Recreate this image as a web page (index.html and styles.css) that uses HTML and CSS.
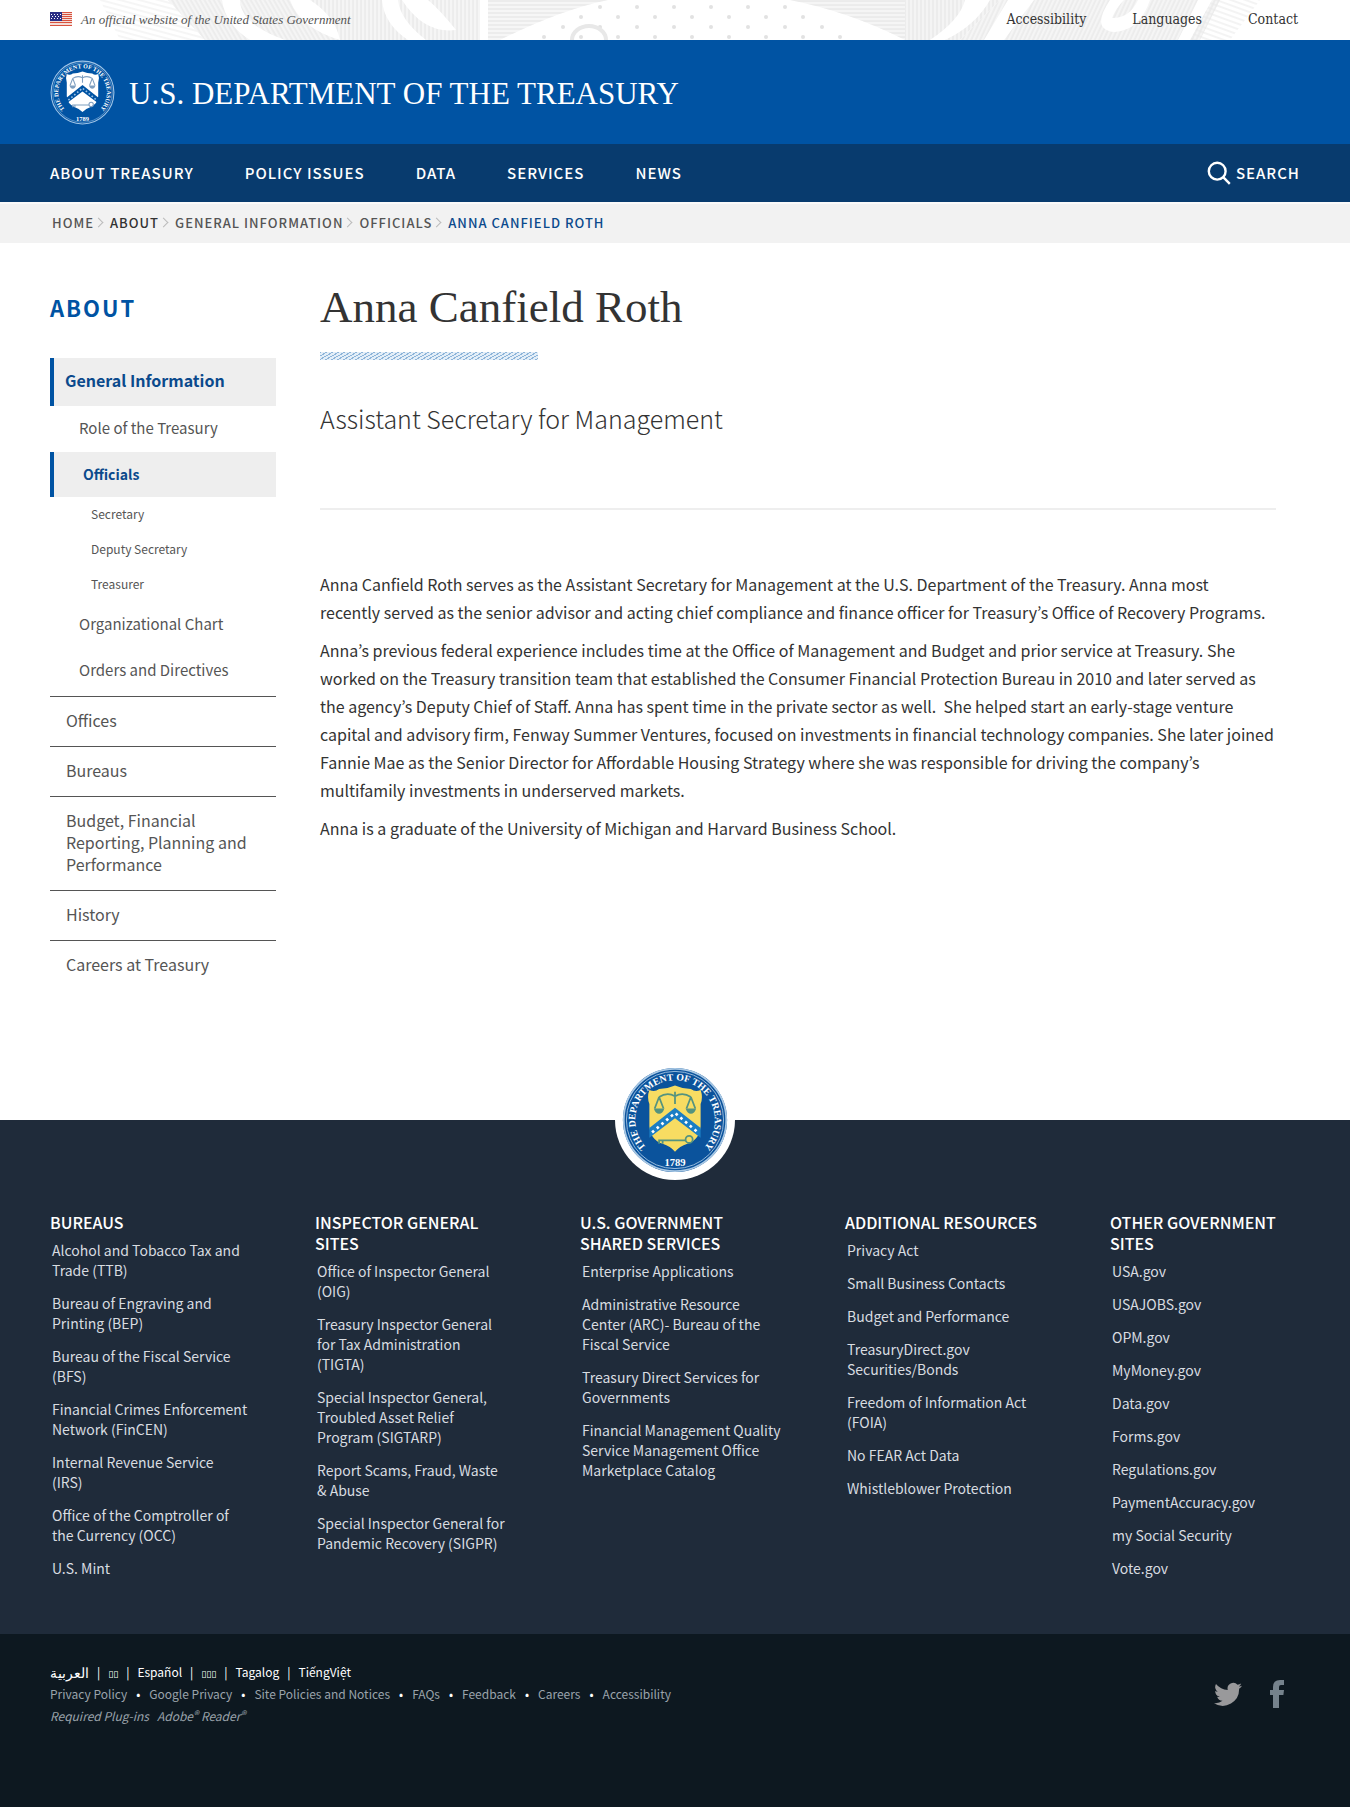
FILE: index.html
```html
<!DOCTYPE html>
<html lang="en">
<head>
<meta charset="utf-8">
<meta name="viewport" content="width=device-width, initial-scale=1">
<title>Anna Canfield Roth | U.S. Department of the Treasury</title>
<link rel="stylesheet" href="styles.css">
</head>
<body>
<svg class="defs" aria-hidden="true">
  <defs>
    <path id="ring" d="M37.500 99A45 45 0 1 1 82.500 99"/>
    <symbol id="seal" viewBox="0 0 120 120">
      <circle class="s-base" cx="60" cy="60" r="59"/>
      <circle class="s-line" cx="60" cy="60" r="58" fill="none" stroke-width="2"/>
      <circle class="s-line" cx="60" cy="60" r="55" fill="none" stroke-width="1"/>
      <path class="s-shield" d="M31 26q6 3 11-1q9 0 18-4q9 4 18 4q5 4 11 1q3 8 0 16v25q-1 15-15 20q-9 3-14 9q-5-6-14-9q-14-5-15-20V42q-3-8 0-16z"/>
      <path class="s-band" d="M31 69L60 46L89 69V80L60 58L31 80z"/>
      <path class="s-stars" d="M34 74L60 52L86 74" fill="none" stroke-width="3" stroke-dasharray="3 4"/>
      <path class="s-ink" d="M60 28V42M42 34Q51 28 60 33Q69 28 78 34M42 34L37 47M42 34L47 47M78 34L73 47M78 34L83 47" fill="none" stroke-width="2"/>
      <path class="s-ink-fill" d="M36 47H48Q46 53 42 53Q38 53 36 47zM72 47H84Q82 53 78 53Q74 53 72 47z"/>
      <path class="s-ink" d="M41 83H72M42 83V87M46 83V87" fill="none" stroke-width="2"/>
      <circle class="s-ink" cx="76" cy="82" r="4" fill="none" stroke-width="2"/>
      <text class="s-text" font-size="11"><textPath href="#ring" startOffset="50%" text-anchor="middle">THE DEPARTMENT OF THE TREASURY</textPath></text>
      <text class="s-text" font-size="12" x="60" y="112" text-anchor="middle">1789</text>
    </symbol>
  </defs>
</svg>

<div class="gov-bar">
  <svg class="gov-art" viewBox="0 0 1350 40" preserveAspectRatio="xMidYMid slice" aria-hidden="true">
    <defs>
      <pattern id="vert" width="4" height="4" patternUnits="userSpaceOnUse"><path d="M1 0V4" stroke="#e4e4e4"/></pattern>
      <pattern id="horiz" width="4" height="4" patternUnits="userSpaceOnUse"><path d="M0 1H4" stroke="#e2e2e2"/></pattern>
      <pattern id="rays-l" width="5" height="5" patternUnits="userSpaceOnUse" patternTransform="rotate(-75)"><path d="M1 0V5" stroke="#ececec"/></pattern>
      <pattern id="steep-l" width="4" height="4" patternUnits="userSpaceOnUse" patternTransform="rotate(-30)"><path d="M1 0V4" stroke="#e4e4e4"/></pattern>
      <pattern id="steep-r" width="4" height="4" patternUnits="userSpaceOnUse" patternTransform="rotate(25)"><path d="M1 0V4" stroke="#e4e4e4"/></pattern>
      <pattern id="rays-r" width="5" height="5" patternUnits="userSpaceOnUse" patternTransform="rotate(-70)"><path d="M1 0V5" stroke="#e8e8e8"/></pattern>
      <pattern id="dots" width="37" height="20" patternUnits="userSpaceOnUse"><circle cx="8" cy="7" r="2" fill="#e2e2e2"/><circle cx="26" cy="17" r="2" fill="#e2e2e2"/></pattern>
    </defs>
    <path d="M100 0H180L205 40H120z" fill="url(#rays-l)"/>
    <path d="M168 0H300L350 40H205z" fill="#f5f5f5"/>
    <path d="M168 0H300L350 40H205z" fill="url(#steep-l)"/>
    <path d="M290 0H487V40H340z" fill="#f5f5f5"/>
    <path d="M290 0H487V40H340z" fill="url(#vert)"/>
    <path d="M222 0Q225 24 250 40H285Q240 24 240 0zM290 0Q300 28 340 40Q335 16 310 0zM382 0Q384 24 408 40H426Q400 20 398 0zM402 0Q424 34 456 30Q440 10 428 0z" fill="#fff"/>
    <path d="M480 0H487V40H480z" fill="#fff"/>
    <path d="M488 0H608Q560 10 500 40H488z" fill="#f6f6f6"/>
    <path d="M488 0H608Q560 10 500 40H488z" fill="url(#horiz)"/>
    <path d="M548 18L600 0H790L850 40H540z" fill="url(#dots)"/>
    <path d="M572 40a17 14 0 0 1 34 0" fill="none" stroke="#e8e8e8" stroke-width="4"/>
    <path d="M790 0H905V40Q850 12 790 0z" fill="#f5f5f5"/>
    <path d="M790 0H905V40Q850 12 790 0z" fill="url(#horiz)"/>
    <path d="M905 0H1000L960 40H905z" fill="#f4f4f4"/>
    <path d="M905 0H1000L960 40H905z" fill="url(#vert)"/>
    <path d="M1000 0H1220L1200 40H960z" fill="#f5f5f5"/>
    <path d="M1000 0H1220L1200 40H960z" fill="url(#steep-r)"/>
    <path d="M965 0H990Q975 26 945 40H930Q960 20 965 0zM1008 0H1034L1004 40H984zM1110 0Q1090 30 1115 32Q1140 30 1150 0H1138Q1130 18 1112 18Q1116 8 1124 0zM1198 0H1212L1190 40H1178z" fill="#fff"/>
    <path d="M1212 0H1260L1230 40H1190z" fill="url(#rays-r)"/>
  </svg>
  <div class="gov-row wrap">
    <svg class="flag" viewBox="0 0 22 14" role="img" aria-label="United States flag">
      <path fill="#f4dcd6" d="M0 0h22v14H0z"/>
      <path stroke="#d8523f" stroke-width="1" d="M0 .5h22M0 2.500h22M0 4.500h22M0 6.500h22M0 8.500h22M0 10.500h22M0 13.500h22"/>
      <path fill="#2b2f86" d="M0 0h12v9H0z"/>
      <path stroke="#fff" stroke-dasharray="1 2" d="M1 2.500h10M2 4.500h9M1 6.500h10"/>
    </svg>
    <span class="gov-note">An official website of the United States Government</span>
    <nav class="gov-links" aria-label="Utility">
      <a href="#">Accessibility</a><a href="#">Languages</a><a href="#">Contact</a>
    </nav>
  </div>
</div>

<header class="brand">
  <a class="brand-link wrap" href="#">
    <svg class="brand-seal seal-mono" role="img" aria-label="Treasury seal"><use href="#seal"/></svg>
    <span>U.S. DEPARTMENT OF THE TREASURY</span>
  </a>
</header>

<div class="main-nav">
  <div class="nav-row wrap">
    <nav class="nav-links" aria-label="Main">
      <a href="#">ABOUT TREASURY</a><a href="#">POLICY ISSUES</a><a href="#">DATA</a><a href="#">SERVICES</a><a href="#">NEWS</a>
    </nav>
    <button class="search" type="button">
      <svg viewBox="0 0 20 20" aria-hidden="true"><circle cx="8.500" cy="8.500" r="7"/><path d="M13.500 13.500l5.500 5.500"/></svg>SEARCH
    </button>
  </div>
</div>

<nav class="crumb-bar" aria-label="Breadcrumb">
  <ol class="crumbs wrap">
    <li><a href="#">HOME</a></li><li><a class="dark" href="#">ABOUT</a></li><li><a href="#">GENERAL INFORMATION</a></li><li><a href="#">OFFICIALS</a></li><li class="current">ANNA CANFIELD ROTH</li>
  </ol>
</nav>

<div class="page wrap">
  <aside class="side">
    <h2>ABOUT</h2>
    <ul class="side-menu">
      <li><a class="top on" href="#">General Information</a>
        <ul class="sub">
          <li><a class="mid" href="#">Role of the Treasury</a></li>
          <li><a class="mid on" href="#">Officials</a>
            <ul>
              <li><a class="low" href="#">Secretary</a></li>
              <li><a class="low" href="#">Deputy Secretary</a></li>
              <li><a class="low" href="#">Treasurer</a></li>
            </ul>
          </li>
          <li><a class="mid" href="#">Organizational Chart</a></li>
          <li><a class="mid" href="#">Orders and Directives</a></li>
        </ul>
      </li>
      <li><a class="top" href="#">Offices</a></li>
      <li><a class="top" href="#">Bureaus</a></li>
      <li><a class="top" href="#">Budget, Financial Reporting, Planning and Performance</a></li>
      <li><a class="top" href="#">History</a></li>
      <li><a class="top" href="#">Careers at Treasury</a></li>
    </ul>
  </aside>
  <main class="content">
    <h1>Anna Canfield Roth</h1>
    <div class="stripe"></div>
    <p class="role">Assistant Secretary for Management</p>
    <hr>
    <div class="bio">
      <p>Anna Canfield Roth serves as the Assistant Secretary for Management at the U.S. Department of the Treasury. Anna most recently&nbsp;served as the senior advisor and acting chief compliance and finance officer for Treasury’s Office of Recovery Programs.</p>
      <p>Anna’s previous federal experience includes time at the Office of Management and Budget and prior service at Treasury. She worked on the Treasury transition team that established the Consumer Financial Protection Bureau in 2010 and later served as the agency’s Deputy Chief of Staff. Anna has spent time in the private sector as well.&nbsp; She helped start an early-stage venture capital and advisory firm, Fenway Summer Ventures, focused on investments in financial technology companies. She later joined Fannie Mae as the Senior Director for Affordable Housing Strategy where she was responsible for driving the company’s multifamily investments in underserved markets.</p>
      <p>Anna is a graduate of the University of Michigan and Harvard Business School.</p>
    </div>
  </main>
</div>

<footer>
  <div class="foot-main">
    <div class="foot-seal"><svg class="seal-color" role="img" aria-label="Treasury seal"><use href="#seal"/></svg></div>
    <div class="foot-cols wrap">
      <section><h3>BUREAUS</h3>
        <ul>
          <li><a href="#">Alcohol and Tobacco Tax and Trade (TTB)</a></li>
          <li><a href="#">Bureau of Engraving and Printing (BEP)</a></li>
          <li><a href="#">Bureau of the Fiscal Service (BFS)</a></li>
          <li><a href="#">Financial&nbsp;Crimes&nbsp;Enforcement Network (FinCEN)</a></li>
          <li><a href="#">Internal Revenue Service (IRS)</a></li>
          <li><a href="#">Office of the Comptroller of the Currency (OCC)</a></li>
          <li><a href="#">U.S. Mint</a></li>
        </ul>
      </section>
      <section><h3>INSPECTOR GENERAL SITES</h3>
        <ul>
          <li><a href="#">Office of Inspector General (OIG)</a></li>
          <li><a href="#">Treasury Inspector General for Tax Administration (TIGTA)</a></li>
          <li><a href="#">Special Inspector General, Troubled Asset Relief Program (SIGTARP)</a></li>
          <li><a href="#">Report Scams, Fraud, Waste &amp;&nbsp;Abuse</a></li>
          <li><a href="#">Special Inspector General for Pandemic Recovery (SIGPR)</a></li>
        </ul>
      </section>
      <section><h3>U.S. GOVERNMENT SHARED SERVICES</h3>
        <ul>
          <li><a href="#">Enterprise Applications</a></li>
          <li><a href="#">Administrative Resource Center (ARC)- Bureau of the Fiscal Service</a></li>
          <li><a href="#">Treasury Direct Services for Governments</a></li>
          <li><a href="#">Financial&nbsp;Management&nbsp;Quality Service Management Office Marketplace Catalog</a></li>
        </ul>
      </section>
      <section><h3>ADDITIONAL&nbsp;RESOURCES</h3>
        <ul>
          <li><a href="#">Privacy Act</a></li>
          <li><a href="#">Small Business Contacts</a></li>
          <li><a href="#">Budget and Performance</a></li>
          <li><a href="#">TreasuryDirect.gov Securities/Bonds</a></li>
          <li><a href="#">Freedom of Information Act (FOIA)</a></li>
          <li><a href="#">No FEAR Act Data</a></li>
          <li><a href="#">Whistleblower Protection</a></li>
        </ul>
      </section>
      <section><h3>OTHER GOVERNMENT SITES</h3>
        <ul>
          <li><a href="#">USA.gov</a></li>
          <li><a href="#">USAJOBS.gov</a></li>
          <li><a href="#">OPM.gov</a></li>
          <li><a href="#">MyMoney.gov</a></li>
          <li><a href="#">Data.gov</a></li>
          <li><a href="#">Forms.gov</a></li>
          <li><a href="#">Regulations.gov</a></li>
          <li><a href="#">PaymentAccuracy.gov</a></li>
          <li><a href="#">my Social Security</a></li>
          <li><a href="#">Vote.gov</a></li>
        </ul>
      </section>
    </div>
  </div>
  <div class="foot-end">
    <div class="foot-end-row wrap">
      <div class="legal">
        <ul class="langs">
          <li><a class="arabic" href="#" lang="ar">العربية</a></li><li><a class="box" href="#">▯▯</a></li><li><a href="#">Español</a></li><li><a class="box" href="#">▯▯▯</a></li><li><a href="#">Tagalog</a></li><li><a href="#">TiếngViệt</a></li>
        </ul>
        <ul class="policies">
          <li><a href="#">Privacy Policy</a></li><li><a href="#">Google Privacy</a></li><li><a href="#">Site Policies and Notices</a></li><li><a href="#">FAQs</a></li><li><a href="#">Feedback</a></li><li><a href="#">Careers</a></li><li><a href="#">Accessibility</a></li>
        </ul>
        <p class="plugins"><span>Required Plug-ins</span><a href="#">Adobe<sup>®</sup> Reader<sup>®</sup></a></p>
      </div>
      <div class="social">
        <a href="#" aria-label="Twitter"><svg class="tw" viewBox="0 0 24 20"><path d="M24 2.400a10 10 0 0 1-2.800.8A5 5 0 0 0 23.300.5a10 10 0 0 1-3.100 1.200 4.900 4.900 0 0 0-8.400 4.500A14 14 0 0 1 1.700 1a4.900 4.900 0 0 0 1.500 6.600A5 5 0 0 1 1 7v.1a4.900 4.900 0 0 0 3.900 4.800 5 5 0 0 1-2.200.1 4.900 4.900 0 0 0 4.600 3.400A9.900 9.900 0 0 1 0 17.400 14 14 0 0 0 21.500 5a10 10 0 0 0 2.500-2.600z"/></svg></a>
        <a href="#" aria-label="Facebook"><svg class="fb" viewBox="0 0 14 28"><path d="M3 28V15H0v-5h3V7Q3 0 10 0h4v5h-3Q9 5 9 7v3h5l-.6 5H9v13z"/></svg></a>
      </div>
    </div>
  </div>
</footer>
</body>
</html>
```
FILE: styles.css
```css
* { box-sizing: border-box; }
body {
  margin: 0;
  background: #fff;
  color: #323a45;
  font-family: "Noto Sans CJK JP", "Noto Sans", sans-serif;
  font-size: 16px;
}
a { color: inherit; text-decoration: none; }
ul, ol { list-style: none; margin: 0; padding: 0; }
h1, h2, h3, p { margin: 0; }
.wrap { padding-left: 50px; padding-right: 50px; }
.defs { position: absolute; width: 0; height: 0; }

/* seal colours */
.seal-mono { --base: #0053a3; --line: #9fc4e6; --shield: #fff; --band: #0053a3; --stars: #9cc3e6; --ink: #7f9fc0; --text: #fff; }
.seal-color { --base: #0b539c; --line: #a9c8e4; --shield: #f7dc62; --band: #1b7ec4; --stars: #fff; --ink: #55937f; --text: #fff; }
.s-base { fill: var(--base); }
.s-line { stroke: var(--line); }
.s-shield { fill: var(--shield); }
.s-band { fill: var(--band); }
.s-stars { stroke: var(--stars); }
.s-ink { stroke: var(--ink); }
.s-ink-fill { fill: var(--ink); }
.s-text { fill: var(--text); font-family: "Liberation Serif", serif; font-weight: 700; }

/* top strip */
.gov-bar { position: relative; height: 40px; overflow: hidden; }
.gov-art { position: absolute; left: 0; width: 100%; height: 100%; }
.gov-row { position: relative; display: flex; align-items: center; height: 38px; }
.flag { width: 22px; height: 14px; margin-right: 9px; }
.gov-note { padding-top: 1px; font: italic 13px "Liberation Serif", serif; color: #555; }
.gov-links {
  display: flex; gap: 46px; margin-left: auto; padding-right: 2px;
  font-family: "DejaVu Serif Condensed", "DejaVu Serif", serif; font-stretch: condensed; font-size: 14px; color: #333;
}

/* brand */
.brand { background: #0053a3; color: #fff; }
.brand-link { display: flex; align-items: center; gap: 14px; height: 104px; font: 31px "Liberation Serif", serif; }
.brand-link span { padding-top: 3px; }
.brand-seal { width: 65px; height: 65px; }

/* main nav */
.main-nav { background: #083b6e; color: #fff; }
.nav-row { display: flex; align-items: center; justify-content: space-between; height: 58px; }
.nav-links { display: flex; gap: 51px; }
.nav-links a, .search { font-size: 15px; font-weight: 500; letter-spacing: 1px; line-height: 20px; }
.search { display: flex; align-items: center; gap: 5px; padding: 0; border: 0; background: none; color: inherit; font-family: inherit; }
.search svg { width: 24px; height: 24px; fill: none; stroke: #fff; stroke-width: 2; }

/* breadcrumb */
.crumb-bar { padding-bottom: 2px; background: #f2f2f2; border-top: 2px solid #fafafa; }
.crumbs { display: flex; align-items: center; height: 37px; margin-left: 2px; font-size: 13px; font-weight: 500; letter-spacing: 1px; color: #555; }
.crumbs li { display: flex; align-items: center; }
.crumbs li + li::before {
  content: ""; width: 6px; height: 6px; margin: 0 8px 0 1px;
  border: solid #bbb; border-width: 1px 1px 0 0; transform: rotate(45deg);
}
.crumbs .dark { color: #333; }
.crumbs .current { color: #0b4a8c; }

/* page body */
.page { display: flex; gap: 44px; padding-top: 36px; padding-bottom: 130px; }
.side { flex: 0 0 226px; }
.side h2 { margin: 10px 0 33px; font-size: 22px; font-weight: 700; line-height: 36px; letter-spacing: 2px; color: #0053a3; }
.side-menu { color: #555; }
.side-menu > li + li { border-top: 1px solid #555; }
.sub { padding-bottom: 2px; }
.side a { display: block; }
.top { padding: 12px 15px 15px 16px; font-size: 16px; line-height: 22px; }
.mid { padding: 11px 29px 13px; font-size: 15px; line-height: 22px; }
.low { padding: 5px 41px 7px; font-size: 12px; line-height: 23px; }
.side .on { background: #eee; border-left: 4px solid #0053a3; color: #0b4a8c; font-weight: 700; }
.top.on { padding: 11px 15px 15px 11px; }
.mid.on { padding-bottom: 12px; font-size: 14px; }
.content { flex: 1; min-width: 0; padding-right: 24px; }
h1 { font: 45px/56px "Liberation Serif", serif; color: #333; }
.stripe {
  width: 218px; height: 8px; margin: 17px 0 38px;
  background: repeating-linear-gradient(150deg, #8db4d9 0 1px, #e3eef8 1px 3px);
}
.role { font-size: 25px; font-weight: 300; line-height: 40px; color: #333; }
hr { margin: 70px 0 60px; border: 0; border-top: 2px solid #eee; }
.bio { font-size: 16px; line-height: 28px; color: #333; }
.bio p { margin-bottom: 10px; }

/* footer */
.foot-main { background: #1f2b3a; color: #d8dce0; padding-bottom: 43px; }
.foot-seal { position: relative; display: flex; height: 92px; justify-content: center; }
.foot-seal svg { width: 120px; height: 120px; margin-top: -60px; padding: 7px; border-radius: 50%; background: #fff; }
.foot-cols { display: grid; grid-template-columns: repeat(5, minmax(0, 1fr)); column-gap: 70px; padding-right: 45px; }
h3 { font-size: 16px; font-weight: 500; line-height: 21px; color: #fff; }
.foot-cols ul { padding: 7px 2px 0; }
.foot-cols li { margin-bottom: 13px; font-size: 14px; line-height: 20px; }
.foot-end { background: #0d1820; color: #9aa3ab; min-height: 173px; }
.foot-end-row { display: flex; justify-content: space-between; padding-top: 27px; font-size: 12px; line-height: 22px; }
.langs, .policies { display: flex; height: 22px; }
.langs { color: #fff; }
.langs li + li::before { content: "|"; margin: 0 8px; }
.policies li + li::before { content: "•"; margin: 0 9px; color: #fff; }
.arabic { font-size: 14px; }
.box { font: 9px "DejaVu Sans", sans-serif; }
.plugins { display: flex; gap: 8px; font-style: italic; }
sup { font-size: 11px; line-height: 0; vertical-align: 2px; }
.social { display: flex; align-items: center; gap: 28px; padding-right: 16px; }
.social a { display: flex; }
.tw { width: 28px; height: 25px; fill: #99999b; }
.fb { width: 14px; height: 28px; fill: #75828c; }
```
